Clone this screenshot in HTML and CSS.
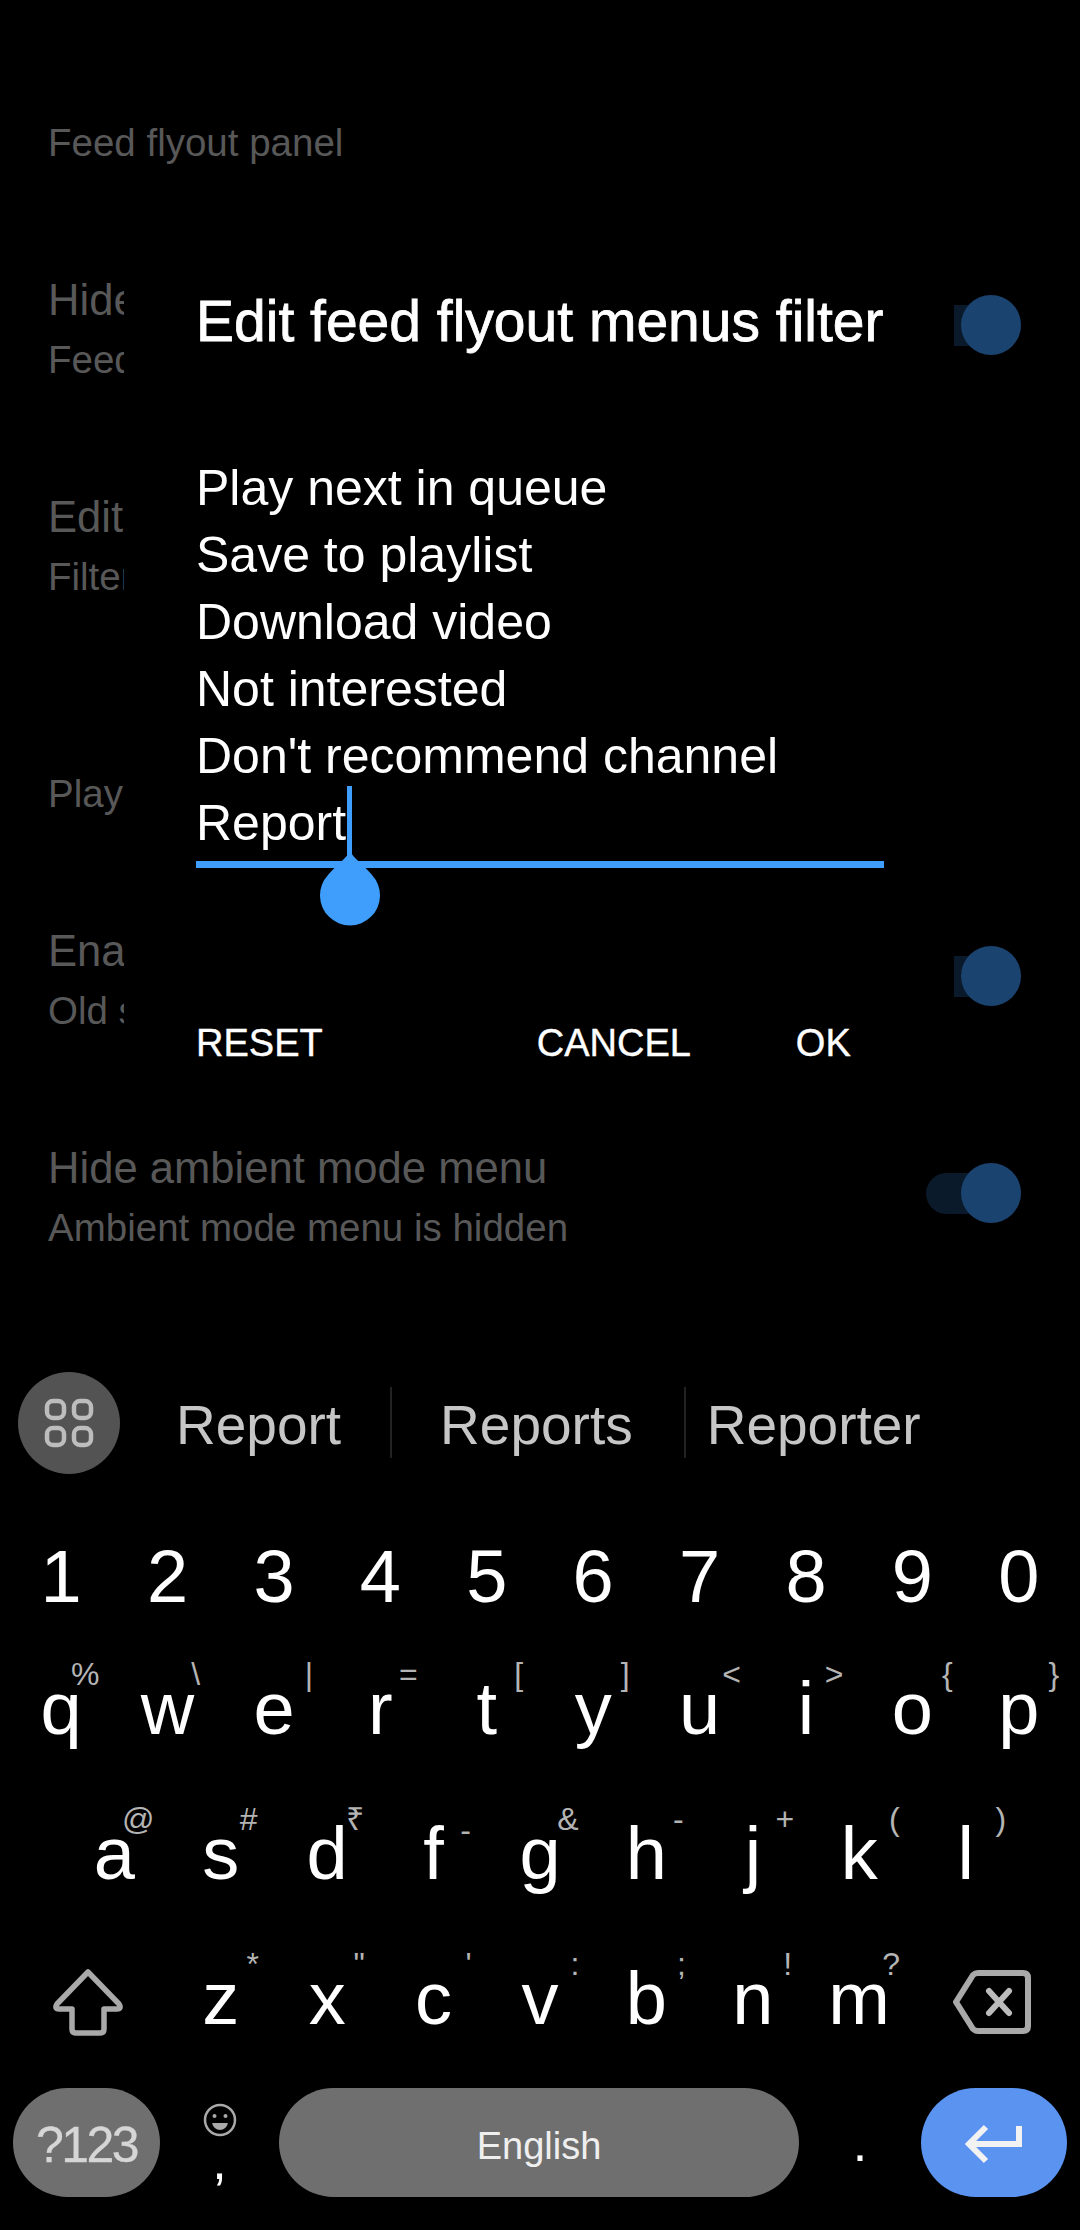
FILE: index.html
```html
<!DOCTYPE html>
<html lang="en">
<head>
    <meta charset="UTF-8">
    <meta name="viewport" content="width=device-width, initial-scale=1.0">
    <title>Edit feed flyout menus filter</title>
    <link rel="stylesheet" href="styles.css">
</head>
<body>
    <div class="settings">
        <div class="section-title">Feed flyout panel</div>
        <div class="row">
            <div class="row-text clipped"><div class="row-title">Hide</div><div class="row-sub">Feed</div></div>
            <div class="toggle"><span class="thumb"></span></div>
        </div>
        <div class="row">
            <div class="row-text clipped"><div class="row-title">Edit</div><div class="row-sub">Filter</div></div>
        </div>
        <div class="section-title section-gap clipped">Player</div>
        <div class="row">
            <div class="row-text clipped"><div class="row-title">Enable</div><div class="row-sub">Old s</div></div>
            <div class="toggle"><span class="thumb"></span></div>
        </div>
        <div class="row">
            <div class="row-text"><div class="row-title">Hide ambient mode menu</div><div class="row-sub">Ambient mode menu is hidden</div></div>
            <div class="toggle"><span class="thumb"></span></div>
        </div>
    </div>

    <div class="dialog">
        <h2 class="dialog-title">Edit feed flyout menus filter</h2>
        <div class="edit">
            <div class="edit-line">Play next in queue</div>
            <div class="edit-line">Save to playlist</div>
            <div class="edit-line">Download video</div>
            <div class="edit-line">Not interested</div>
            <div class="edit-line">Don't recommend channel</div>
            <div class="edit-line">Report<span class="cursor">
                <svg class="handle" width="60" height="76" viewBox="0 0 60 76"><path d="M30 0 C34 8 44 14 52 24 A30 30 0 1 1 8 24 C16 14 26 8 30 0 Z" fill="#3f9dfb"/></svg>
            </span></div>
        </div>
        <div class="actions">
            <span class="action action-reset">RESET</span>
            <span class="action action-cancel">CANCEL</span>
            <span class="action">OK</span>
        </div>
    </div>

    <div class="keyboard">
        <div class="suggestions">
            <div class="apps">
                <svg width="50" height="50" viewBox="0 0 50 50" fill="none" stroke="#bdbdbd" stroke-width="4.5">
                    <rect x="3" y="3" width="17" height="17" rx="6"/>
                    <rect x="30" y="3" width="17" height="17" rx="6"/>
                    <rect x="3" y="30" width="17" height="17" rx="6"/>
                    <rect x="30" y="30" width="17" height="17" rx="6"/>
                </svg>
            </div>
            <span class="word word-1">Report</span>
            <span class="word-sep"></span>
            <span class="word word-2">Reports</span>
            <span class="word-sep"></span>
            <span class="word word-3">Reporter</span>
        </div>

        <div class="key-row digits">
            <span class="key">1</span><span class="key">2</span><span class="key">3</span><span class="key">4</span><span class="key">5</span>
            <span class="key">6</span><span class="key">7</span><span class="key">8</span><span class="key">9</span><span class="key">0</span>
        </div>

        <div class="key-row">
            <span class="key">q<i class="near">%</i></span><span class="key">w<i class="mid">\</i></span><span class="key">e<i class="far">|</i></span><span class="key">r<i class="mid">=</i></span><span class="key">t<i>[</i></span>
            <span class="key">y<i>]</i></span><span class="key">u<i>&lt;</i></span><span class="key">i<i class="mid">&gt;</i></span><span class="key">o<i class="far">{</i></span><span class="key">p<i class="far">}</i></span>
        </div>

        <div class="key-row row-home">
            <span class="key">a<i class="near">@</i></span><span class="key">s<i class="mid">#</i></span><span class="key">d<i class="mid">₹</i></span><span class="key">f<i class="low">-</i></span><span class="key">g<i class="mid">&amp;</i></span>
            <span class="key">h<i>-</i></span><span class="key">j<i>+</i></span><span class="key">k<i class="far">(</i></span><span class="key">l<i class="far">)</i></span>
        </div>

        <div class="key-row row-shift">
            <span class="key key-icon">
                <svg width="72" height="68" viewBox="0 0 72 68" fill="none" stroke="#a9a9a9" stroke-width="5.5" stroke-linejoin="round">
                    <path d="M36 4 L67 36 Q70 41 65 41 H52 V61 Q52 65 48 65 H24 Q20 65 20 61 V41 H7 Q2 41 5 36 Z"/>
                </svg>
            </span>
            <span class="key">z<i>*</i></span><span class="key">x<i>"</i></span><span class="key">c<i class="far">'</i></span><span class="key">v<i class="far">:</i></span>
            <span class="key">b<i class="far">;</i></span><span class="key">n<i class="far">!</i></span><span class="key">m<i>?</i></span>
            <span class="key key-icon">
                <svg width="78" height="64" viewBox="0 0 78 64" fill="none" stroke="#a9a9a9" stroke-width="6" stroke-linejoin="round" stroke-linecap="round">
                    <path d="M3 32 L20 5 Q22 3 25 3 H70 Q75 3 75 8 V56 Q75 61 70 61 H25 Q22 61 20 59 Z"/>
                    <path d="M36 21 L56 43 M56 21 L36 43" stroke="#bcbcbc"/>
                </svg>
            </span>
        </div>

        <div class="bottom-row">
            <span class="pill mode">?123</span>
            <span class="comma-key">
                <svg width="34" height="34" viewBox="0 0 34 34" fill="none" stroke="#a9a9a9" stroke-width="2.5">
                    <circle cx="17" cy="17" r="15"/>
                    <circle cx="11.5" cy="13" r="2" fill="#a9a9a9" stroke="none"/>
                    <circle cx="22.5" cy="13" r="2" fill="#a9a9a9" stroke="none"/>
                    <path d="M9 20 H25 Q23 27 17 27 Q11 27 9 20 Z" fill="#a9a9a9" stroke="none"/>
                </svg>
                <span class="comma">,</span>
            </span>
            <span class="pill space">English</span>
            <span class="period">.</span>
            <span class="pill enter">
                <svg width="60" height="40" viewBox="0 0 60 40" fill="none" stroke="#f2f2f2" stroke-width="6">
                    <path d="M55 2 V20 H6"/>
                    <path d="M22 3 L5 20 L22 37"/>
                </svg>
            </span>
        </div>
    </div>
</body>
</html>
```

FILE: styles.css
```css
* {
    box-sizing: border-box;
}
body {
    margin: 0;
    width: 1080px;
    height: 2230px;
    position: relative;
    overflow: hidden;
    background-color: #000;
    color: #fff;
    font-family: "Liberation Sans", Arial, sans-serif;
    display: flex;
    flex-direction: column;
}

/* dimmed settings list behind the dialog */
.settings {
    display: flex;
    flex-direction: column;
    gap: 99px;
    padding: 113px 59px 0 48px;
    color: #585858;
}
.section-title {
    font-size: 38.5px;
    line-height: 59px;
    white-space: nowrap;
}
.section-gap {
    margin-top: 59px;
}
.clipped {
    width: 76px;
    overflow: hidden;
}
.row {
    display: flex;
    justify-content: space-between;
    align-items: center;
    height: 118px;
}
.row-title {
    font-size: 43.6px;
    line-height: 59px;
    white-space: nowrap;
}
.row-sub {
    font-size: 38.5px;
    line-height: 59px;
    white-space: nowrap;
}
.toggle {
    position: relative;
    width: 95px;
    height: 41px;
    margin-bottom: 9px;
    border-radius: 21px;
    background-color: #0b1a2b;
}
.thumb {
    position: absolute;
    right: 0;
    top: -10px;
    width: 60px;
    height: 60px;
    border-radius: 50%;
    background-color: #1b4370;
}

/* dialog */
.dialog {
    position: absolute;
    left: 124px;
    top: 223px;
    width: 830px;
    height: 909px;
    padding: 0 70px 0 72px;
    background-color: #000;
}
.dialog-title {
    margin: 0;
    padding-top: 68px;
    font-size: 57px;
    font-weight: 400;
    line-height: 60px;
    white-space: nowrap;
    -webkit-text-stroke: 0.8px #fff;
}
.edit {
    height: 413px;
    margin-top: 104px;
    border-bottom: 7px solid #3f9dfb;
}
.edit-line {
    font-size: 50px;
    line-height: 67px;
    white-space: nowrap;
}
.cursor {
    position: relative;
    display: inline-block;
    width: 0;
}
.cursor::before {
    content: "";
    position: absolute;
    left: 1px;
    bottom: -16px;
    width: 5px;
    height: 70px;
    background-color: #3f9dfb;
}
.handle {
    position: absolute;
    left: -26px;
    top: 11px;
}
.actions {
    display: flex;
    margin-top: 153px;
    font-size: 38px;
    line-height: 44px;
}
.action {
    -webkit-text-stroke: 0.4px #fff;
}
.action-reset {
    margin-right: 214px;
}
.action-cancel {
    margin-right: 105px;
}

/* keyboard */
.keyboard {
    margin-top: auto;
    height: 858px;
}
.suggestions {
    display: flex;
    align-items: center;
    height: 101px;
    margin-left: 18px;
    margin-bottom: 44px;
    color: #c6c6c6;
    font-size: 55px;
}
.apps {
    display: flex;
    align-items: center;
    justify-content: center;
    width: 102px;
    height: 102px;
    border-radius: 50%;
    background-color: #535353;
}
.word {
    padding-top: 4px;
    white-space: nowrap;
}
.word-1 {
    margin-left: 56px;
    margin-right: 49px;
}
.word-2 {
    margin-left: 48px;
    margin-right: 51px;
}
.word-3 {
    margin-left: 21px;
}
.word-sep {
    width: 2px;
    height: 71px;
    background-color: #222;
}
.key-row {
    display: grid;
    grid-template-columns: repeat(10, 1fr);
    height: 145px;
    padding: 0 8px;
    font-size: 74px;
    line-height: 145px;
}
.digits {
    height: 119px;
    line-height: 119px;
}
.row-home {
    grid-template-columns: repeat(9, 1fr);
    padding: 0 61px;
}
.row-shift {
    grid-template-columns: 1.5fr repeat(7, 1fr) 1.5fr;
}
.key {
    position: relative;
    text-align: center;
}
.key i {
    position: absolute;
    left: calc(50% + 32px);
    top: 5px;
    width: 0;
    display: flex;
    justify-content: center;
    font-style: normal;
    font-size: 32px;
    line-height: 66px;
    color: #b4b4b4;
}
.key i.near {
    left: calc(50% + 24px);
}
.key i.mid {
    left: calc(50% + 28px);
}
.key i.far {
    left: calc(50% + 35px);
}
.key i.low {
    top: 16px;
}
.key-icon {
    display: flex;
    align-items: center;
    justify-content: center;
    padding-top: 6px;
}
.bottom-row {
    display: flex;
    height: 109px;
    margin-top: 17px;
    padding: 0 13px;
}
.pill {
    display: flex;
    align-items: center;
    justify-content: center;
    height: 109px;
    border-radius: 55px;
    background-color: #6f6f6f;
}
.mode {
    width: 147px;
    padding-top: 4px;
    font-size: 50px;
    letter-spacing: -2.5px;
    color: #d6d6d6;
    -webkit-text-stroke: 0.3px #d6d6d6;
}
.comma-key {
    display: flex;
    flex-direction: column;
    align-items: center;
    width: 119px;
    padding-top: 15px;
}
.comma {
    font-size: 52px;
    line-height: 40px;
    margin-top: 4px;
}
.space {
    width: 520px;
    font-size: 38px;
    color: #efefef;
    padding-top: 8px;
}
.period {
    width: 122px;
    text-align: center;
    font-size: 52px;
    line-height: 110px;
}
.enter {
    width: 146px;
    padding-top: 3px;
    background-color: #5b93f1;
}
```
